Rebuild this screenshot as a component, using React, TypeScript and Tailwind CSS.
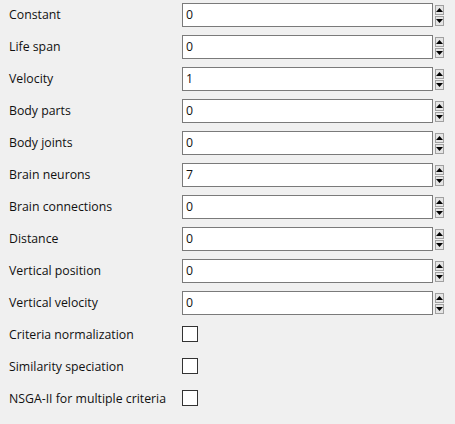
const numberFields = [
  { label: "Constant", value: "0" },
  { label: "Life span", value: "0" },
  { label: "Velocity", value: "1" },
  { label: "Body parts", value: "0" },
  { label: "Body joints", value: "0" },
  { label: "Brain neurons", value: "7" },
  { label: "Brain connections", value: "0" },
  { label: "Distance", value: "0" },
  { label: "Vertical position", value: "0" },
  { label: "Vertical velocity", value: "0" },
];

const checkFields = [
  "Criteria normalization",
  "Similarity speciation",
  "NSGA-II for multiple criteria",
];

function Spinner() {
  return (
    <div className="ml-[2px] flex h-[21px] w-[9px] flex-col">
      <div className="flex h-[10px] items-center justify-center border border-[#a0a0a0] bg-[#e5e5e5]">
        <svg width="7" height="4" viewBox="0 0 7 4">
          <path d="M3.5 0 L7 4 L0 4 Z" fill="#000" />
        </svg>
      </div>
      <div className="mt-px flex h-[10px] items-center justify-center border border-[#a0a0a0] bg-[#e5e5e5]">
        <svg width="7" height="4" viewBox="0 0 7 4">
          <path d="M0 0 L7 0 L3.5 4 Z" fill="#000" />
        </svg>
      </div>
    </div>
  );
}

export default function App() {
  return (
    <div
      className="h-[424px] w-[455px] overflow-hidden bg-[#f0f0f0] pl-[9px] text-[12.3px] text-[#111]"
      style={{ fontFamily: '"Open Sans", "Liberation Sans", sans-serif' }}
    >
      <div className="-mt-px">
        {numberFields.map((f) => (
          <div key={f.label} className="flex h-[32px] items-center">
            <div className="w-[173px]">{f.label}</div>
            <div className="flex h-[24px] w-[251px] items-center border border-[#7a7a7a] bg-white pl-[3px]">
              {f.value}
            </div>
            <Spinner />
          </div>
        ))}
        {checkFields.map((label) => (
          <div key={label} className="flex h-[32px] items-center">
            <div className="w-[173px]">{label}</div>
            <div className="mb-[2px] h-[16px] w-[16px] border border-[#333333] bg-white" />
          </div>
        ))}
      </div>
    </div>
  );
}
